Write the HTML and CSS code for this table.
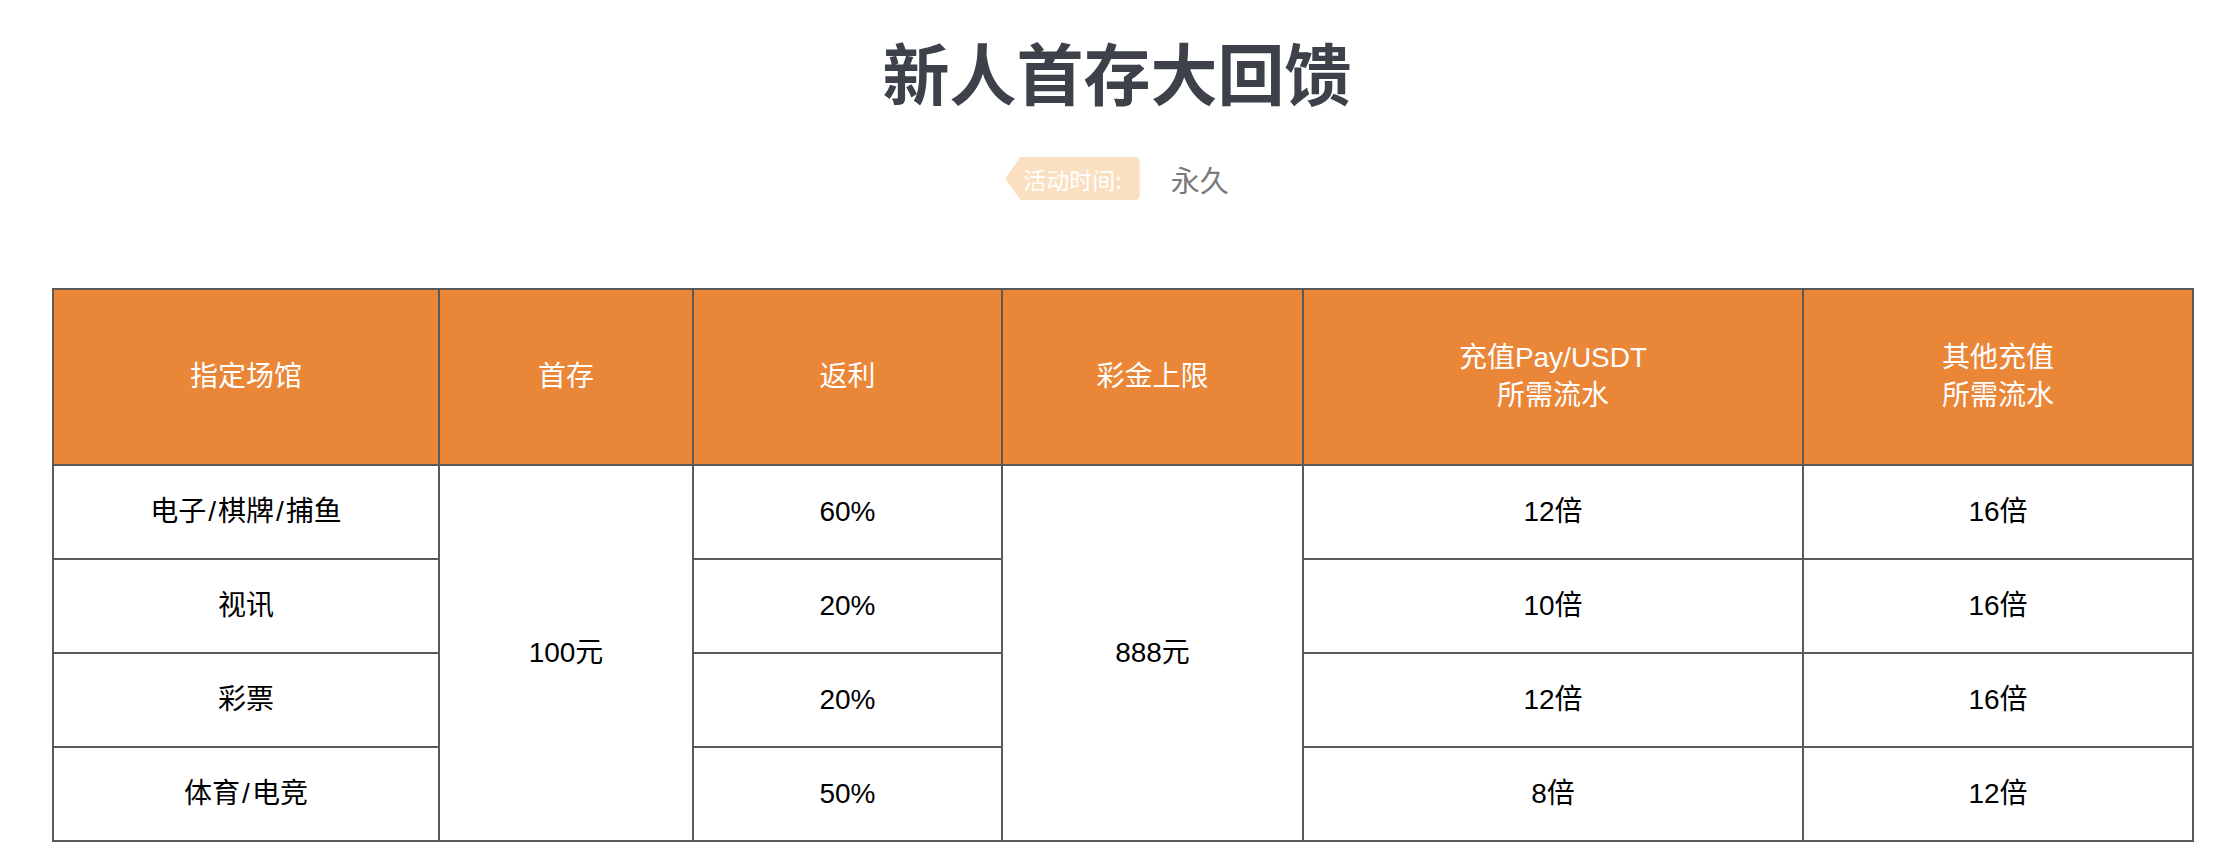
FILE: index.html
```html
<!DOCTYPE html>
<html lang="zh-CN">
<head>
<meta charset="utf-8">
<title>新人首存大回馈</title>
<link rel="stylesheet" href="styles.css">
</head>
<body>
<div class="page">
  <h1 class="title">新人首存大回馈</h1>
  <div class="time-row">
    <span class="badge">活动时间:</span>
    <span class="time-value">永久</span>
  </div>
  <table class="promo">
    <colgroup>
      <col class="c1"><col class="c2"><col class="c3"><col class="c4"><col class="c5"><col class="c6">
    </colgroup>
    <thead>
      <tr>
        <th>指定场馆</th>
        <th>首存</th>
        <th>返利</th>
        <th>彩金上限</th>
        <th>充值Pay/USDT<br>所需流水</th>
        <th>其他充值<br>所需流水</th>
      </tr>
    </thead>
    <tbody>
      <tr>
        <td>电子<span class="sep">/</span>棋牌<span class="sep">/</span>捕鱼</td>
        <td rowspan="4">100元</td>
        <td>60%</td>
        <td rowspan="4">888元</td>
        <td>12倍</td>
        <td>16倍</td>
      </tr>
      <tr>
        <td>视讯</td>
        <td>20%</td>
        <td>10倍</td>
        <td>16倍</td>
      </tr>
      <tr>
        <td>彩票</td>
        <td>20%</td>
        <td>12倍</td>
        <td>16倍</td>
      </tr>
      <tr>
        <td>体育<span class="sep">/</span>电竞</td>
        <td>50%</td>
        <td>8倍</td>
        <td>12倍</td>
      </tr>
    </tbody>
  </table>
</div>
</body>
</html>
```

FILE: styles.css
```css
html, body {
  margin: 0;
  padding: 0;
  background: #ffffff;
}

body {
  font-family: "Liberation Sans", "Noto Sans CJK SC", sans-serif;
}

.page {
  padding-top: 31px;
}

.title {
  margin: 0;
  text-align: center;
  font-family: "Noto Sans CJK SC", sans-serif;
  font-weight: 700;
  font-size: 67px;
  line-height: 80px;
  color: #3d424a;
}

.time-row {
  margin-top: 46px;
  display: flex;
  justify-content: center;
  align-items: center;
  gap: 31px;
  height: 43px;
}

.badge {
  display: flex;
  align-items: center;
  height: 43px;
  padding: 0 18px 0 18px;
  background: #fadfc0;
  color: #ffffff;
  font-family: "Noto Sans CJK SC", sans-serif;
  font-size: 23px;
  border-radius: 0 5px 5px 0;
  clip-path: polygon(15px 0, 100% 0, 100% 100%, 15px 100%, 0 50%);
}

.time-value {
  font-family: "Noto Sans CJK SC", sans-serif;
  font-size: 29px;
  color: #7a7a7a;
}

.promo {
  margin: 88px 0 0 52px;
  width: 2140px;
  border-collapse: collapse;
  table-layout: fixed;
  font-size: 28px;
}

.promo .c1 { width: 386px; }
.promo .c2 { width: 254px; }
.promo .c3 { width: 309px; }
.promo .c4 { width: 301px; }
.promo .c5 { width: 500px; }
.promo .c6 { width: 390px; }

.promo th,
.promo td {
  border: 2px solid #5a5a5a;
  text-align: center;
  vertical-align: middle;
  padding: 0;
}

.promo th {
  height: 174px;
  background: #ea8637;
  color: #ffffff;
  font-weight: 400;
  line-height: 38px;
}

.promo td {
  height: 92px;
  color: #000000;
  line-height: 38px;
}

.promo .sep {
  padding: 0 2px;
}
```
